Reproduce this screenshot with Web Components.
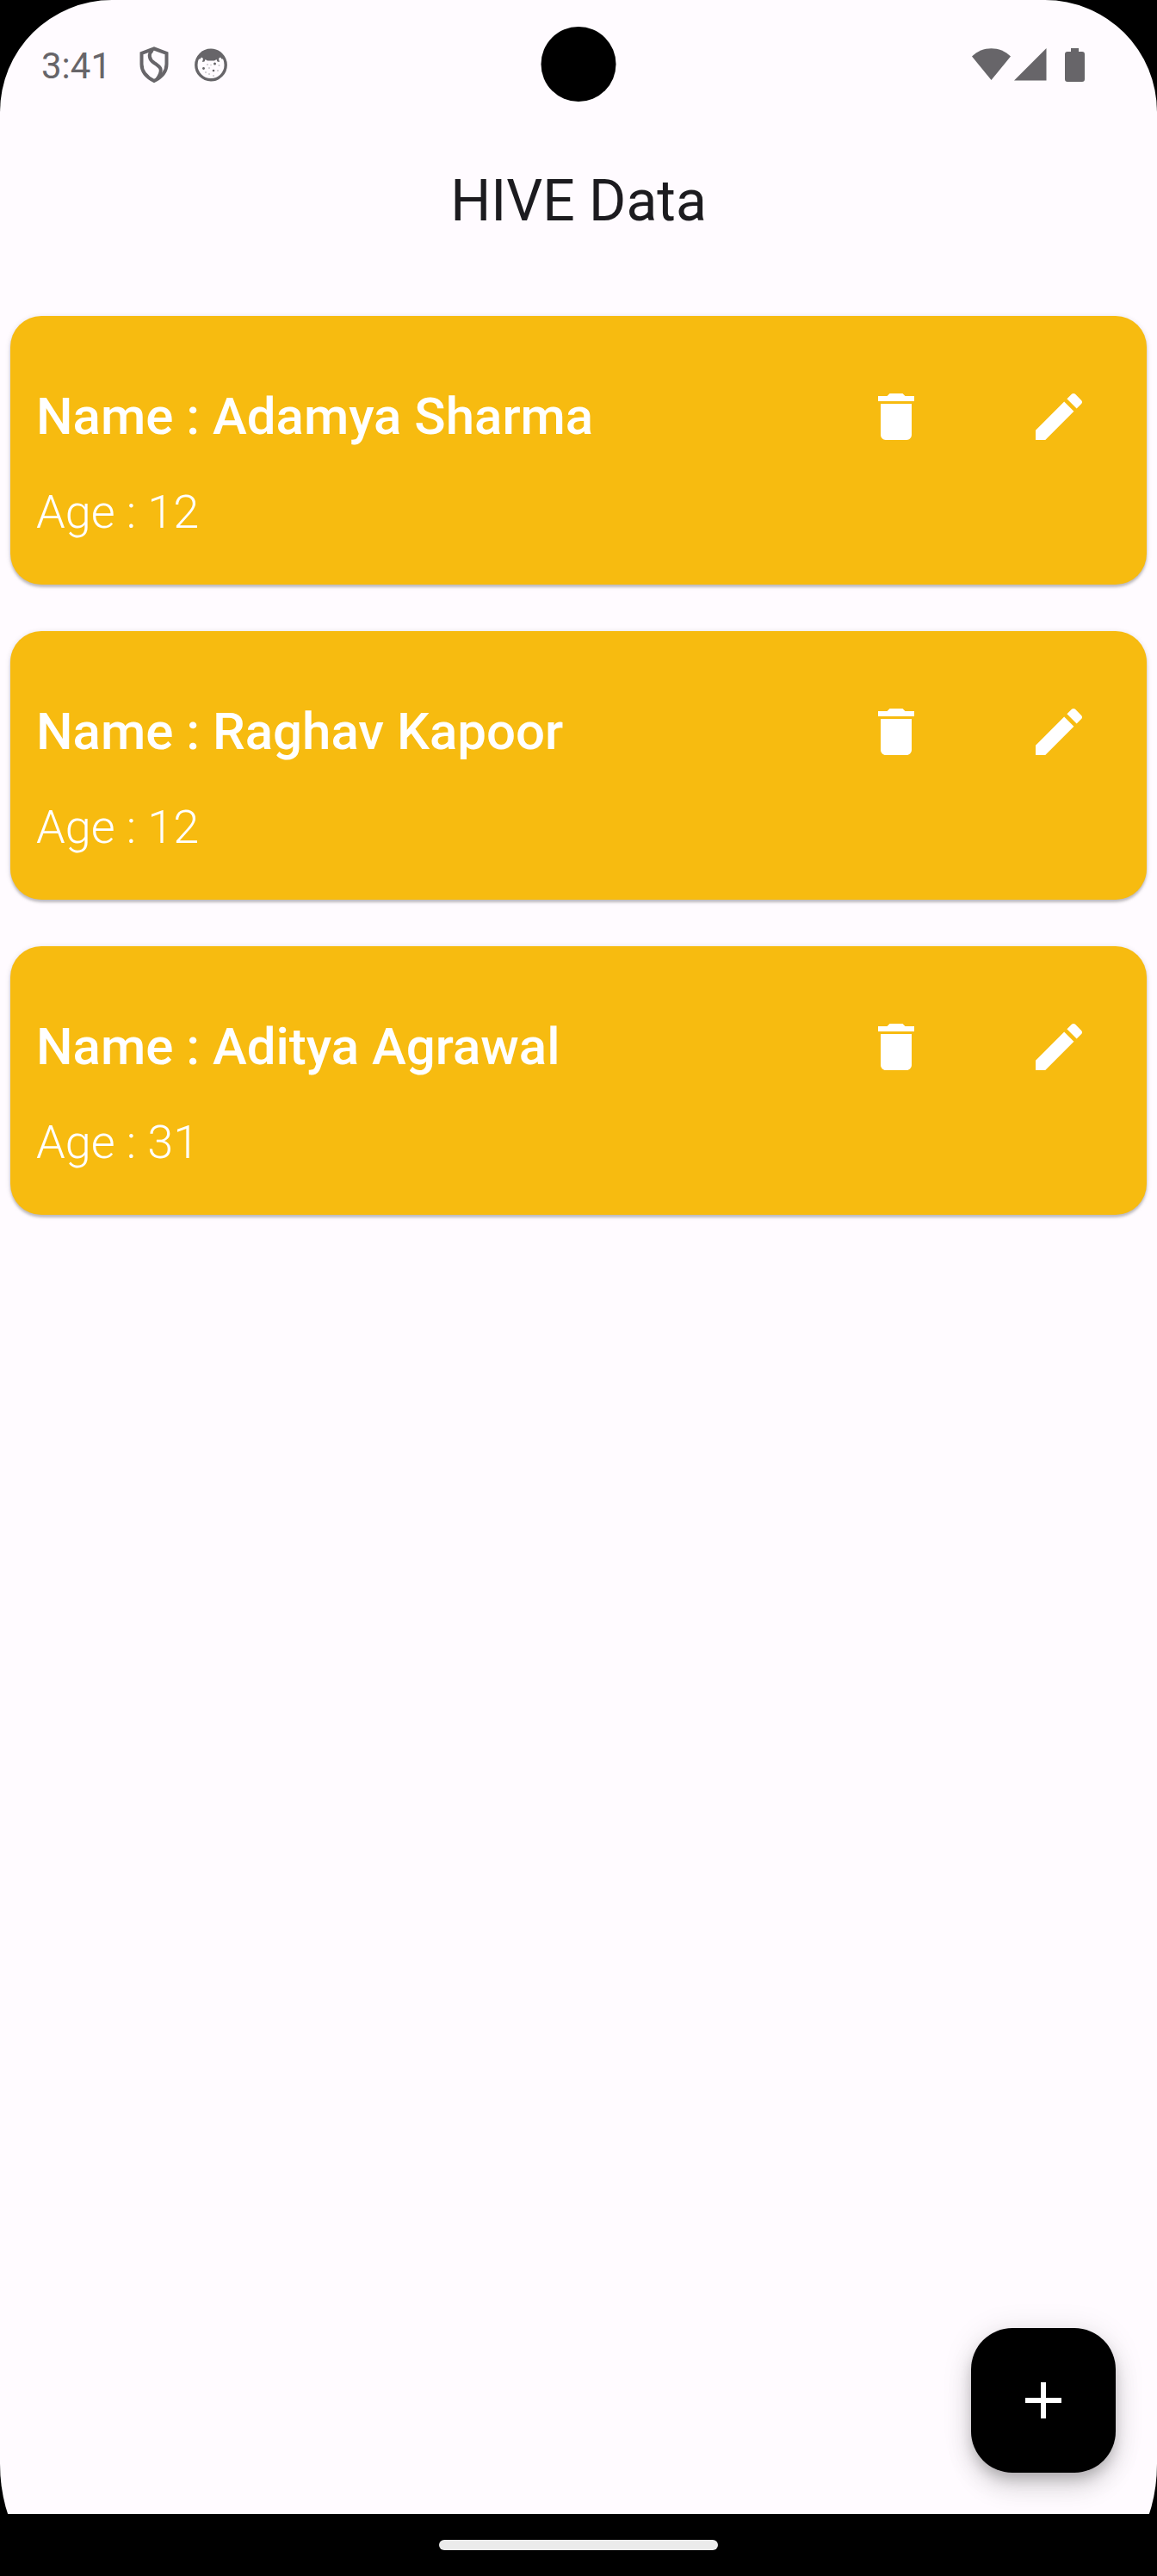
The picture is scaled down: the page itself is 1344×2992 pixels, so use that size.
<!DOCTYPE html>
<html lang="en">
<head>
<meta charset="utf-8">
<meta name="viewport" content="width=device-width, initial-scale=1">
<title>HIVE Data</title>
<style>
  html, body { margin: 0; background: #000; }
  body { font-family: Roboto, "Liberation Sans", sans-serif; }
</style>
</head>
<body>
<hive-app></hive-app>

<template id="t-app">
  <style>
    :host { display: flex; flex-direction: column; min-height: 100vh; position: relative; background: linear-gradient(to top, #000 72px, #fffbff 72px); color: #1c1b1f; border-radius: 130px 130px 86px 86px / 130px; overflow: hidden; }
    header { display: flex; align-items: center; justify-content: center; height: 168px; }
    h1 { margin: 0; font-size: 66px; line-height: 84px; font-weight: 400; }
    main { flex: 1; position: relative; display: flex; flex-direction: column; gap: 54px; padding: 49px 12px; }
    add-button { position: absolute; right: 48px; bottom: 48px; }
  </style>
  <status-bar></status-bar>
  <header><h1>HIVE Data</h1></header>
  <main>
    <person-card>
      <span slot="name">Name : Adamya Sharma</span>
      <span slot="age">Age : 12</span>
    </person-card>
    <person-card>
      <span slot="name">Name : Raghav Kapoor</span>
      <span slot="age">Age : 12</span>
    </person-card>
    <person-card>
      <span slot="name">Name : Aditya Agrawal</span>
      <span slot="age">Age : 31</span>
    </person-card>
    <add-button></add-button>
  </main>
  <nav-bar></nav-bar>
</template>

<template id="t-status">
  <style>
    :host { display: flex; align-items: center; justify-content: space-between; height: 150px; padding: 0 72px 0 48px; box-sizing: border-box; position: relative; color: #676569; }
    .side { display: flex; align-items: center; }
    time { font-size: 42px; line-height: 50px; margin-right: 26px; padding-top: 4px; }
    svg { display: block; width: 48px; height: 48px; fill: currentColor; }
    .notes { gap: 18px; }
    .camera { position: absolute; left: 50%; top: 31px; width: 87px; height: 87px; border-radius: 50%; background: #000; transform: translateX(-50%); }
  </style>
  <div class="side">
    <time>3:41</time>
    <div class="side notes">
      <svg viewBox="0 0 48 48" aria-hidden="true">
        <path d="M24 5.500 L38.500 10.800 V23.500 C38.500 32.500 32 39 24 43 C16 39 9.500 32.500 9.500 23.500 V10.800 Z" fill="none" stroke="currentColor" stroke-width="4"/>
        <path d="M22 7 C17 12 18 18 24 22 C32 27 35 30 27.500 41" fill="none" stroke="currentColor" stroke-width="4"/>
      </svg>
      <svg viewBox="0 0 48 48" aria-hidden="true">
        <circle cx="24" cy="24.500" r="17.200" fill="none" stroke="currentColor" stroke-width="3.400"/>
        <path d="M9 16 C12 9 18 6.500 24 6.500 C30 6.500 36 9 39 16 L37 18 L35 15.500 L33 17 L34 21 L31.500 20.500 L30.500 18 L28 19.500 H20 L17.500 18 L16.500 20.500 L14 21 L15 17 L13 15.500 L11 18 Z"/>
        <circle cx="15.500" cy="28.500" r="1.400"/><circle cx="27" cy="31" r="1.300"/><circle cx="28.500" cy="23" r="1.500"/>
        <g opacity=".35"><circle cx="20" cy="24" r="1"/><circle cx="22" cy="28" r="1"/><circle cx="33.500" cy="25" r="1"/><circle cx="24" cy="24.500" r=".8"/><circle cx="18" cy="33" r="1"/><circle cx="22" cy="35" r="1"/><circle cx="27" cy="37" r="1"/><circle cx="32" cy="31" r="1"/></g>
      </svg>
    </div>
  </div>
  <div class="side">
    <svg viewBox="0 0 48 48" aria-hidden="true"><path d="M23.500 42 L1 14.500 C13 2 34 2 46 14.500 Z"/></svg>
    <svg viewBox="0 0 48 48" aria-hidden="true"><path d="M39.500 5 V42.500 H2 Z"/></svg>
    <svg viewBox="0 0 48 48" aria-hidden="true"><path d="M20 5 H29 V9 H33 Q36 9 36 12 V41 Q36 44 33 44 H16 Q13 44 13 41 V12 Q13 9 16 9 H20 Z"/></svg>
  </div>
  <div class="camera"></div>
</template>

<template id="t-card">
  <style>
    :host { display: block; padding: 45px 30px; border-radius: 36px; background: #f7bb10; color: #fff; box-shadow: 0 3px 3px rgba(0,0,0,.2), 0 1px 6px rgba(0,0,0,.12); }
    .top { display: flex; align-items: center; gap: 45px; }
    .name { flex: 1; font-size: 60px; line-height: 72px; font-weight: 500; }
    .age { font-size: 54px; line-height: 78px; font-weight: 300; }
    button { width: 144px; height: 144px; padding: 36px; border: 0; background: none; color: inherit; cursor: pointer; }
    svg { display: block; width: 72px; height: 72px; fill: currentColor; }
  </style>
  <div class="top">
    <div class="name"><slot name="name"></slot></div>
    <button type="button" aria-label="Delete"><svg viewBox="0 0 24 24"><path d="M6 19c0 1.100.9 2 2 2h8c1.100 0 2-.9 2-2V7H6v12zM19 4h-3.500l-1-1h-5l-1 1H5v2h14V4z"/></svg></button>
    <button type="button" aria-label="Edit"><svg viewBox="0 0 24 24"><path d="M3 17.250V21h3.750L17.810 9.940l-3.750-3.750L3 17.250zM20.710 7.040c.39-.39.39-1.020 0-1.410l-2.340-2.340c-.39-.39-1.020-.39-1.410 0l-1.830 1.830 3.750 3.750 1.830-1.830z"/></svg></button>
  </div>
  <div class="age"><slot name="age"></slot></div>
</template>

<template id="t-add">
  <style>
    :host { display: block; }
    button { display: block; width: 168px; height: 168px; padding: 48px; border: 0; border-radius: 48px; background: #000; color: #fff; cursor: pointer; box-shadow: 0 9px 15px -3px rgba(0,0,0,.2), 0 18px 30px rgba(0,0,0,.12), 0 3px 36px rgba(0,0,0,.1); }
    svg { display: block; width: 72px; height: 72px; fill: currentColor; }
  </style>
  <button type="button" aria-label="Add"><svg viewBox="0 0 24 24"><path d="M19 13h-6v6h-2v-6H5v-2h6V5h2v6h6v2z"/></svg></button>
</template>

<template id="t-nav">
  <style>
    :host { display: flex; align-items: center; justify-content: center; height: 72px; }
    .pill { width: 324px; height: 12px; border-radius: 6px; background: #ebebeb; }
  </style>
  <div class="pill"></div>
</template>

<script>
  class TemplateElement extends HTMLElement {
    constructor() {
      super();
      this.attachShadow({ mode: "open" })
        .append(document.getElementById(this.constructor.template).content.cloneNode(true));
    }
  }
  customElements.define("status-bar", class extends TemplateElement { static template = "t-status"; });
  customElements.define("person-card", class extends TemplateElement { static template = "t-card"; });
  customElements.define("add-button", class extends TemplateElement { static template = "t-add"; });
  customElements.define("nav-bar", class extends TemplateElement { static template = "t-nav"; });
  customElements.define("hive-app", class extends TemplateElement { static template = "t-app"; });
</script>
</body>
</html>
